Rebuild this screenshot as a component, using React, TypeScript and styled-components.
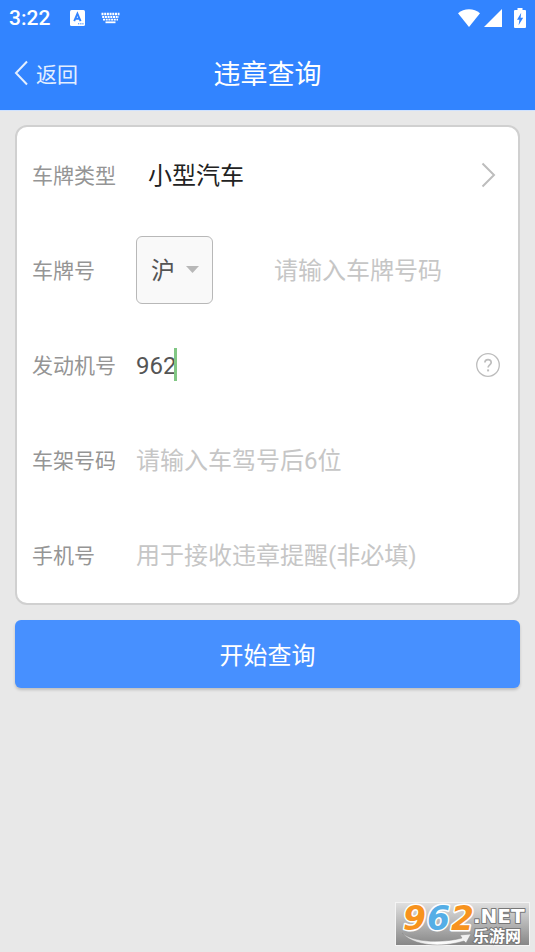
import React, { useState } from "react";
import styled, { createGlobalStyle } from "styled-components";

const GlobalStyle = createGlobalStyle`
  *, *::before, *::after { box-sizing: border-box; }
  body {
    margin: 0;
    background: #e8e8e8;
    font-family: Roboto, "Noto Sans CJK SC", sans-serif;
  }
  button, input, select { font-family: inherit; }
  svg { display: block; flex: none; }
`;

const Page = styled.div`
  position: relative;
  min-height: 100vh;
  background: #e8e8e8;
`;

const Header = styled.header`
  background: #3284ff;
  border-bottom: 1px solid #cfe2ff;
  color: #fff;
`;

const StatusBar = styled.div`
  display: flex;
  align-items: center;
  height: 36px;
  padding: 0 9px;
`;

const Clock = styled.time`
  margin-right: 20px;
  font-size: 21px;
  line-height: 24px;
  font-weight: 500;
`;

const StatusIcons = styled.div<{ $end?: boolean }>`
  display: flex;
  align-items: center;
  gap: ${(p) => (p.$end ? 4 : 16)}px;
  margin-left: ${(p) => (p.$end ? "auto" : "0")};
`;

const BatteryBox = styled.span`
  margin-left: 8px;
`;

const NavBar = styled.nav`
  display: grid;
  grid-template-columns: 1fr auto 1fr;
  align-items: center;
  height: 74px;
  padding: 0 14px;
`;

const BackButton = styled.button`
  display: flex;
  align-items: center;
  justify-self: start;
  gap: 8px;
  padding: 0;
  border: 0;
  background: none;
  color: #e4efff;
  font-size: 21px;
  line-height: 32px;
  cursor: pointer;
`;

const ButtonText = styled.span`
  padding-top: 3px;
`;

const Title = styled.h1`
  margin: 0;
  padding-top: 3px;
  font-size: 27px;
  line-height: 40px;
  font-weight: 400;
`;

const Form = styled.form`
  display: flex;
  flex-direction: column;
  gap: 15px;
  padding: 14px 15px;
`;

const Card = styled.div`
  padding: 0 15px 1px;
  border: 2px solid #d0d0d0;
  border-radius: 12px;
  background: #fff;
`;

const Row = styled.div`
  display: flex;
  align-items: center;
  height: 95px;
`;

const Label = styled.label`
  flex: none;
  width: 104px;
  padding-top: 3px;
  color: #959595;
  font-size: 21px;
  line-height: 32px;
`;

const TypeButton = styled.button`
  display: flex;
  flex: 1;
  align-items: center;
  justify-content: space-between;
  padding: 0 7px 0 12px;
  border: 0;
  background: none;
  color: #222;
  font-size: 24px;
  line-height: 36px;
  cursor: pointer;
`;

const SelectBox = styled.div`
  position: relative;
  flex: none;
`;

const Select = styled.select`
  appearance: none;
  display: block;
  width: 77px;
  height: 68px;
  padding: 3px 30px 0 14px;
  border: 1px solid #b8b8b8;
  border-radius: 6px;
  background: #f9f9f9;
  color: #555;
  font-size: 24px;
`;

const SelectArrow = styled.svg`
  position: absolute;
  top: 30px;
  right: 14px;
  pointer-events: none;
`;

const Field = styled.div`
  position: relative;
  display: flex;
  flex: 1;
  min-width: 0;
`;

const TextInput = styled.input<{ $centered?: boolean }>`
  flex: 1;
  width: 100%;
  min-width: 0;
  height: 48px;
  padding: 3px 0 0;
  border: 0;
  outline: 0;
  background: transparent;
  color: #555;
  caret-color: #81c784;
  font-size: 24px;
  text-align: ${(p) => (p.$centered ? "center" : "left")};
  &::placeholder { color: #c6c6c6; opacity: 1; }
`;

const Caret = styled.span`
  position: absolute;
  top: 7px;
  left: 38px;
  width: 3px;
  height: 33px;
  background: #81c784;
`;

const HelpButton = styled.button`
  flex: none;
  padding: 0 3px;
  border: 0;
  background: none;
  cursor: pointer;
`;

const Submit = styled.button`
  height: 68px;
  padding: 3px 0 0;
  border: 0;
  border-radius: 6px;
  background: #4790ff;
  box-shadow: 0 2px 3px rgba(0, 0, 0, 0.18);
  color: #fff;
  font-size: 24px;
  line-height: 36px;
  cursor: pointer;
`;

const Watermark = styled.svg`
  position: absolute;
  right: 5px;
  bottom: 2px;
`;

const InputMethodIcon = () => (
  <svg width="15" height="16" viewBox="0 0 15 16">
    <rect width="15" height="16" rx="1.5" fill="#fff" />
    <path d="M4.2 11.2 7.4 3.6 10.6 11.2M5.4 8.7h4" fill="none" stroke="#3284ff" strokeWidth="1.9" />
    <path d="M8 13.8h1.3M10.2 13.8h1.3M12.3 13.8h1.2" stroke="#3284ff" strokeWidth="1" />
  </svg>
);

const KeyboardIcon = () => (
  <svg width="19" height="12" viewBox="0 0 19 12" stroke="#fff" fill="none">
    <path d="M.5 2h18" strokeWidth="2.4" strokeDasharray="2 .7" />
    <path d="M1.2 5h16.6" strokeWidth="2.2" strokeDasharray="2 .7" />
    <path d="M2 7.7h15" strokeWidth="1.8" strokeDasharray="2 .7" />
    <path d="M4.5 10.3h10" strokeWidth="1.8" />
  </svg>
);

const WifiIcon = () => (
  <svg width="22" height="18" viewBox="0 0 22 18">
    <path d="M0 4.2C6-1.2 16-1.2 22 4.2L11 18Z" fill="#fff" />
  </svg>
);

const SignalIcon = () => (
  <svg width="18" height="18" viewBox="0 0 18 18">
    <path d="M18 0v18H0Z" fill="#fff" />
  </svg>
);

const BatteryIcon = () => (
  <svg width="12" height="20" viewBox="0 0 12 20">
    <path d="M3.5 0h5v2H11a1 1 0 0 1 1 1v16a1 1 0 0 1-1 1H1a1 1 0 0 1-1-1V3a1 1 0 0 1 1-1h2.5Z" fill="#fff" />
    <path d="M7.2 4.8 3 11.8h2.4l-.8 5.4 4.6-7.4H6.6Z" fill="#3284ff" />
  </svg>
);

const Logo = () => (
  <Watermark width="135" height="56" viewBox="0 -8 135 56" role="img" aria-label="962.NET 乐游网">
    <defs>
      <linearGradient id="logo-back" x1="0" y1="0" x2="0" y2="1">
        <stop offset="0" stopColor="#e0e0e0" />
        <stop offset="0.5" stopColor="#b4b4b4" />
        <stop offset="1" stopColor="#868686" />
      </linearGradient>
      <linearGradient id="logo-arrow" x1="0" y1="0" x2="1" y2="0">
        <stop offset="0" stopColor="#fff" stopOpacity="0.6" />
        <stop offset="0.5" stopColor="#fff" />
        <stop offset="1" stopColor="#eee" />
      </linearGradient>
    </defs>
    <rect x="0.5" y="0.5" width="134" height="43" fill="url(#logo-back)" stroke="#f4f4f4" />
    <path d="M7 31C20 41 48 41 67 36L65 33 76 32 71 41 69 39C46 46 18 44 7 31Z" fill="url(#logo-arrow)" stroke="#888" strokeWidth="0.5" />
    <g
      fontFamily="DejaVu Sans, sans-serif"
      fontWeight="700"
      strokeLinejoin="round"
      paintOrder="stroke"
    >
      <g fontSize="33" fontStyle="italic" stroke="#fff" strokeWidth="3">
        <text x="8" y="28" fill="#f7931e">9</text>
        <text x="32" y="28" fill="#55aee6">6</text>
        <text x="56" y="28" fill="#f7931e">2</text>
      </g>
      <text x="78" y="21" fontSize="20" fill="#fff" stroke="#777" strokeWidth="2">.NET</text>
    </g>
    <text
      x="78"
      y="40"
      fontSize="16"
      fontFamily="Noto Sans CJK SC, sans-serif"
      fontWeight="700"
      fill="#fff"
      stroke="#777"
      strokeWidth="2"
      paintOrder="stroke"
    >
      乐游网
    </text>
  </Watermark>
);

export default function App() {
  const [engine, setEngine] = useState("962");

  return (
    <Page>
      <GlobalStyle />
      <Header>
        <StatusBar>
          <Clock>3:22</Clock>
          <StatusIcons>
            <InputMethodIcon />
            <KeyboardIcon />
          </StatusIcons>
          <StatusIcons $end>
            <WifiIcon />
            <SignalIcon />
            <BatteryBox>
              <BatteryIcon />
            </BatteryBox>
          </StatusIcons>
        </StatusBar>
        <NavBar>
          <BackButton type="button">
            <svg width="14" height="26" viewBox="0 0 14 26" fill="none" stroke="#e4efff" strokeWidth="2">
              <path d="M13 1.5 2 13 13 24.5" />
            </svg>
            <ButtonText>返回</ButtonText>
          </BackButton>
          <Title>违章查询</Title>
        </NavBar>
      </Header>

      <Form onSubmit={(e) => e.preventDefault()}>
        <Card>
          <Row>
            <Label htmlFor="type">车牌类型</Label>
            <TypeButton id="type" type="button">
              <ButtonText>小型汽车</ButtonText>
              <svg width="15" height="26" viewBox="0 0 15 26" fill="none" stroke="#bdbdbd" strokeWidth="2">
                <path d="M1.5 1.5 13 13 1.5 24.5" />
              </svg>
            </TypeButton>
          </Row>
          <Row>
            <Label htmlFor="plate">车牌号</Label>
            <SelectBox>
              <Select aria-label="省份" defaultValue="沪">
                <option>沪</option>
              </Select>
              <SelectArrow width="13" height="7" viewBox="0 0 13 7">
                <path d="M0 0h13L6.5 7Z" fill="#b8b8b8" />
              </SelectArrow>
            </SelectBox>
            <Field>
              <TextInput id="plate" $centered placeholder="请输入车牌号码" />
            </Field>
          </Row>
          <Row>
            <Label htmlFor="engine">发动机号</Label>
            <Field>
              <TextInput id="engine" value={engine} onChange={(e) => setEngine(e.target.value)} />
              {engine === "962" && <Caret />}
            </Field>
            <HelpButton type="button" aria-label="帮助">
              <svg width="24" height="24" viewBox="0 0 24 24" fill="none" stroke="#bdbdbd">
                <circle cx="12" cy="12" r="11.3" strokeWidth="1.3" />
                <path d="M8.9 9.6c0-4 6.3-4 6.3-.2 0 2.4-3.1 2.5-3.1 5.2" strokeWidth="1.7" />
                <path d="M12.1 16.4v2" strokeWidth="2" />
              </svg>
            </HelpButton>
          </Row>
          <Row>
            <Label htmlFor="frame">车架号码</Label>
            <Field>
              <TextInput id="frame" placeholder="请输入车驾号后6位" />
            </Field>
          </Row>
          <Row>
            <Label htmlFor="phone">手机号</Label>
            <Field>
              <TextInput id="phone" type="tel" placeholder="用于接收违章提醒(非必填)" />
            </Field>
          </Row>
        </Card>
        <Submit type="submit">开始查询</Submit>
      </Form>
      <Logo />
    </Page>
  );
}
